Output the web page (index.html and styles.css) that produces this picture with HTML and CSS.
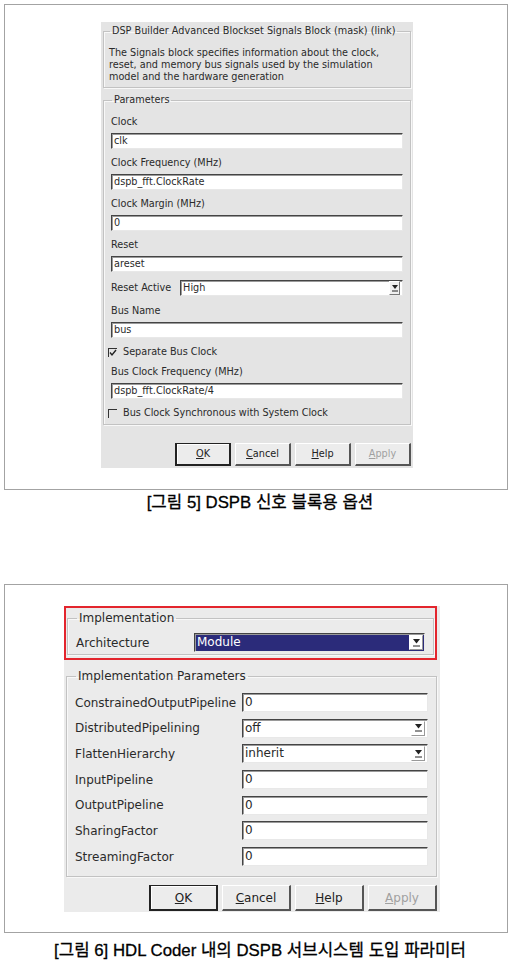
FILE: index.html
```html
<!DOCTYPE html>
<html lang="ko">
  <head>
    <meta charset="UTF-8" />
    <title>DSPB 옵션</title>
    <link rel="stylesheet" href="styles.css">
  </head>
  <body>
    <div class="frame frame-signals">
      <div class="dialog dialog-signals">
        <fieldset class="group group-desc">
          <legend>DSP Builder Advanced Blockset Signals Block (mask) (link)</legend>
          <p>The Signals block specifies information about the clock,<br>
          reset, and memory bus signals used by the simulation<br>
          model and the hardware generation</p>
        </fieldset>

        <fieldset class="group group-params">
          <legend>Parameters</legend>
          <div class="field">
            <label>Clock</label>
            <div class="input">clk</div>
          </div>
          <div class="field">
            <label>Clock Frequency (MHz)</label>
            <div class="input">dspb_fft.ClockRate</div>
          </div>
          <div class="field">
            <label>Clock Margin (MHz)</label>
            <div class="input">0</div>
          </div>
          <div class="field">
            <label>Reset</label>
            <div class="input">areset</div>
          </div>
          <div class="inline-field">
            <label>Reset Active</label>
            <div class="input select">
              <span>High</span>
              <span class="arrow"><svg width="6" height="7" viewBox="0 0 6 7"><path d="M0 0h6L3 4z" fill="#222"/><path d="M0 6h6" stroke="#222"/></svg></span>
            </div>
          </div>
          <div class="field">
            <label>Bus Name</label>
            <div class="input">bus</div>
          </div>
          <div class="check">
            <span class="box"><svg width="8" height="8" viewBox="0 0 8 8"><path d="M1 3.5l2 2.5 4-5" fill="none" stroke="#222" stroke-width="1.4"/></svg></span>
            Separate Bus Clock
          </div>
          <div class="field">
            <label>Bus Clock Frequency (MHz)</label>
            <div class="input">dspb_fft.ClockRate/4</div>
          </div>
          <div class="check">
            <span class="box"></span>
            Bus Clock Synchronous with System Clock
          </div>
        </fieldset>

        <div class="buttons">
          <button class="default"><u>O</u>K</button>
          <button><u>C</u>ancel</button>
          <button><u>H</u>elp</button>
          <button class="disabled"><u>A</u>pply</button>
        </div>
      </div>
    </div>
    <p class="caption caption-signals">[그림 5] DSPB 신호 블록용 옵션</p>

    <div class="frame frame-hdl">
      <div class="dialog dialog-hdl">
        <div class="highlight">
          <fieldset class="group group-impl">
            <legend>Implementation</legend>
            <div class="row">
              <label>Architecture</label>
              <div class="input select selected">
                <span>Module</span>
                <span class="arrow"><svg width="7" height="8" viewBox="0 0 7 8"><path d="M0 0h7L3.5 4.5z" fill="#222"/><path d="M0 7h7" stroke="#222"/></svg></span>
              </div>
            </div>
          </fieldset>
        </div>

        <fieldset class="group group-impl-params">
          <legend>Implementation Parameters</legend>
          <div class="row">
            <label>ConstrainedOutputPipeline</label>
            <div class="input">0</div>
          </div>
          <div class="row">
            <label>DistributedPipelining</label>
            <div class="input select">
              <span>off</span>
              <span class="arrow"><svg width="7" height="8" viewBox="0 0 7 8"><path d="M0 0h7L3.5 4.5z" fill="#222"/><path d="M0 7h7" stroke="#222"/></svg></span>
            </div>
          </div>
          <div class="row">
            <label>FlattenHierarchy</label>
            <div class="input select">
              <span>inherit</span>
              <span class="arrow"><svg width="7" height="8" viewBox="0 0 7 8"><path d="M0 0h7L3.5 4.5z" fill="#222"/><path d="M0 7h7" stroke="#222"/></svg></span>
            </div>
          </div>
          <div class="row">
            <label>InputPipeline</label>
            <div class="input">0</div>
          </div>
          <div class="row">
            <label>OutputPipeline</label>
            <div class="input">0</div>
          </div>
          <div class="row">
            <label>SharingFactor</label>
            <div class="input">0</div>
          </div>
          <div class="row">
            <label>StreamingFactor</label>
            <div class="input">0</div>
          </div>
        </fieldset>

        <div class="buttons">
          <button class="default"><u>O</u>K</button>
          <button><u>C</u>ancel</button>
          <button><u>H</u>elp</button>
          <button class="disabled"><u>A</u>pply</button>
        </div>
      </div>
    </div>
    <p class="caption caption-hdl">[그림 6] HDL Coder 내의 DSPB 서브시스템 도입 파라미터</p>
  </body>
</html>
```

FILE: styles.css
```css
body {
  margin: 0;
  width: 520px;
  background: #fff;
  font-family: "DejaVu Sans", Verdana, sans-serif;
  color: #2a2a2a;
}
.frame {
  box-sizing: border-box;
  width: 504px;
  margin-left: 4px;
  border: 1px solid #a3a3a3;
  background: #fff;
}
.frame-signals {
  margin-top: 4px;
  height: 486px;
  padding: 17px 0 0 96px;
}
.frame-hdl {
  margin-top: 69px;
  height: 349px;
  padding: 21px 0 0 59px;
}
.caption {
  margin: 0;
  text-align: center;
  font-family: "Liberation Sans", "Noto Sans CJK KR", sans-serif;
  font-size: 16.8px;
  line-height: 24px;
  color: #000;
  -webkit-text-stroke: 0.3px #000;
}
.caption-signals {
  margin-top: 1px;
}
.caption-hdl {
  margin-top: 6px;
}

/* dialogs */
.dialog {
  box-sizing: border-box;
  display: flex;
  flex-direction: column;
}
.dialog-signals {
  width: 312px;
  height: 446px;
  padding: 3px 2px 2px 2px;
  background: #e4e4e4;
  font-size: 9.7px;
  line-height: 12px;
}
.dialog-hdl {
  width: 376px;
  height: 306px;
  padding: 0 3px 1px 0;
  background: #ebebeb;
  font-size: 12px;
  line-height: 14px;
}
.group {
  margin: 0;
  border: 1px solid #c2c2c2;
  box-shadow: 1px 1px 0 #f8f8f8, inset 1px 1px 0 #f8f8f8;
  min-width: 0;
}
.group legend {
  padding: 0 2px;
  margin-left: 1px;
}
.group p {
  margin: 0;
  white-space: nowrap;
}
.group-desc {
  padding: 10px 5px 4px 5px;
}
.group-params {
  margin-top: 6px;
  padding: 10px 7px 5px 7px;
}

/* form fields */
.field {
  display: flex;
  flex-direction: column;
  gap: 5px;
  margin-bottom: 8px;
}
.input {
  box-sizing: border-box;
  height: 16px;
  padding: 0 2px;
  background: #fff;
  border: 1px solid #e8e8e8;
  border-top-color: #444;
  border-left-color: #444;
  box-shadow: inset 1px 1px 0 #9a9a9a;
  line-height: 14px;
  white-space: nowrap;
}
.select {
  display: flex;
  justify-content: space-between;
  align-items: center;
}
.arrow {
  display: flex;
  align-items: center;
  justify-content: center;
  width: 9px;
  height: 12px;
  background: #efefef;
  border: 1px solid #777;
  border-top-color: #fff;
  border-left-color: #fff;
}
.inline-field {
  display: flex;
  align-items: center;
  gap: 9px;
  margin: 1px 0 9px;
}
.inline-field .input {
  flex: 1;
}
.check {
  display: flex;
  align-items: center;
  gap: 6px;
  margin-left: -3px;
  margin-bottom: 8px;
  height: 12px;
}
.check:last-child {
  margin-bottom: 0;
}
.box {
  box-sizing: border-box;
  display: flex;
  align-items: center;
  justify-content: center;
  width: 9px;
  height: 9px;
  border-top: 1.5px solid #333;
  border-left: 1.5px solid #333;
}

/* buttons */
.buttons {
  display: flex;
  justify-content: flex-end;
  gap: 4px;
  margin-top: auto;
}
button {
  box-sizing: border-box;
  width: 56px;
  height: 23px;
  padding: 0;
  font: inherit;
  color: #222;
  background: #ececec;
  border: 2px solid #555;
  border-top: 1px solid #fff;
  border-left: 1px solid #fff;
}
button.default {
  border: 2px solid #222;
  border-top-width: 1px;
  border-left-width: 2px;
  box-shadow: inset 1px 1px 0 #fff;
}
button.disabled {
  color: #a0a0a0;
}
.dialog-hdl button {
  width: 69px;
  height: 26px;
}

/* hdl coder dialog */
.highlight {
  border: 2px solid #e3252d;
  padding: 3px 1px 3px 1px;
}
.group-impl {
  padding: 8px 8px 2px 8px;
}
.row {
  display: flex;
  align-items: center;
  justify-content: space-between;
}
.row label {
  white-space: nowrap;
}
.dialog-hdl .input {
  width: 186px;
  height: 19px;
  line-height: 17px;
}
.dialog-hdl .arrow {
  width: 12px;
  height: 13px;
  background: #fff;
  border: 1px solid #999;
  border-top-color: #fff;
  border-left-color: #fff;
}
.group-impl .input {
  width: 231px;
  height: 19px;
}
.selected {
  background: #2b2b7a;
  color: #fff;
  padding-right: 1px;
}
.group-impl-params {
  margin: 9px 0 0 2px;
  padding: 10px 8px 10px 8px;
  display: flex;
  flex-direction: column;
  gap: 6.7px;
}
.dialog-hdl .buttons {
  margin-top: auto;
}
```
